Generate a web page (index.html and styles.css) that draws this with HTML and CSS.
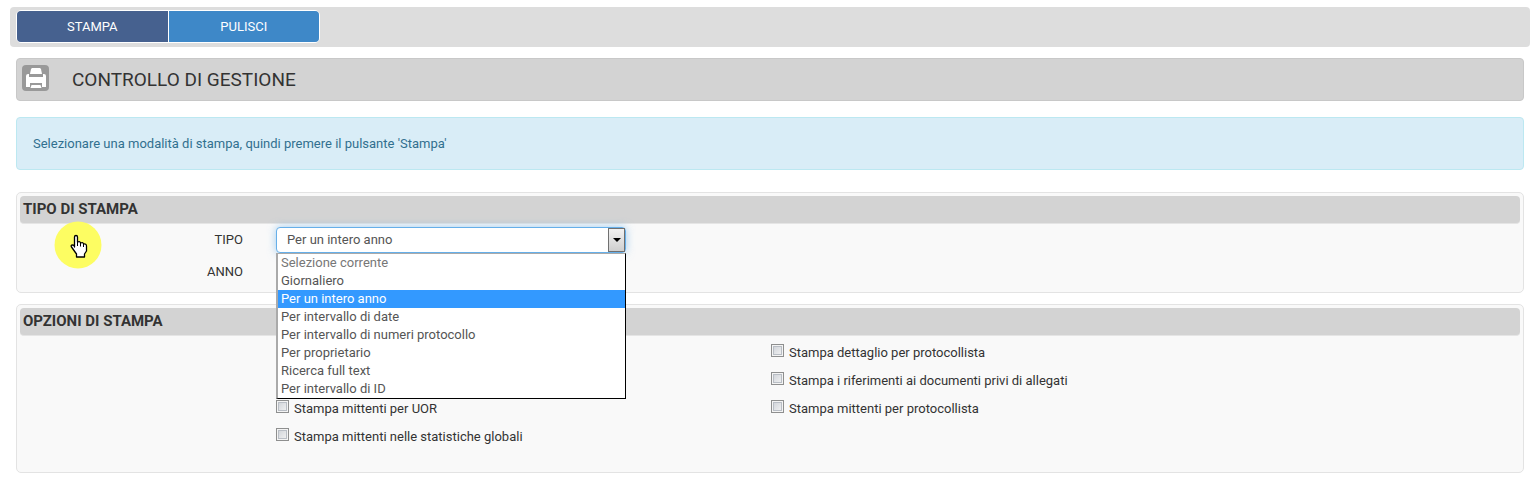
FILE: index.html
```
<!DOCTYPE html>
<html lang="it">
<head>
  <meta charset="utf-8">
  <title>Controllo di gestione</title>
  <link rel="stylesheet" href="styles.css">
</head>
<body>
  <nav class="toolbar">
    <div class="btn-group">
      <button type="submit" form="print-form" class="btn btn-active">STAMPA</button>
      <button type="reset" form="print-form" class="btn">PULISCI</button>
    </div>
  </nav>
  <main>
    <header class="page-title">
      <svg class="print-icon" width="27" height="26" viewBox="0 0 27 26" aria-hidden="true">
        <rect width="27" height="26" rx="4" fill="#999"/>
        <path d="M10 3h8l1 1 1 5H8l1-5z" fill="#fff"/>
        <path d="M4 11q0-2 2-2h1v3h14V9h1q2 0 2 2v11h-4v-4H8v4H4z" fill="#fff"/>
        <path d="M9.500 20h9l1 3H8.500z" fill="#fff"/>
      </svg>
      <h1>CONTROLLO DI GESTIONE</h1>
    </header>
    <p class="alert">Selezionare una modalità di stampa, quindi premere il pulsante 'Stampa'</p>
    <form id="print-form">
      <section class="panel">
        <h2>TIPO DI STAMPA</h2>
        <div class="fields">
          <label for="tipo">TIPO</label>
          <div class="select-box">
            <select id="tipo">
              <option>Per un intero anno</option>
            </select>
            <span class="arrow"></span>
            <ul class="menu" role="listbox" aria-label="Tipo">
              <li role="option" class="muted">Selezione corrente</li>
              <li role="option">Giornaliero</li>
              <li role="option" class="selected" aria-selected="true">Per un intero anno</li>
              <li role="option">Per intervallo di date</li>
              <li role="option">Per intervallo di numeri protocollo</li>
              <li role="option">Per proprietario</li>
              <li role="option">Ricerca full text</li>
              <li role="option">Per intervallo di ID</li>
            </ul>
          </div>
          <label for="anno">ANNO</label>
          <input type="text" id="anno" class="year">
        </div>
      </section>
      <section class="panel options-panel">
        <h2>OPZIONI DI STAMPA</h2>
        <div class="options">
          <div class="column column-end">
            <label class="check"><input type="checkbox">Stampa mittenti per UOR</label>
            <label class="check"><input type="checkbox">Stampa mittenti nelle statistiche globali</label>
          </div>
          <div class="column">
            <label class="check"><input type="checkbox">Stampa dettaglio per protocollista</label>
            <label class="check"><input type="checkbox">Stampa i riferimenti ai documenti privi di allegati</label>
            <label class="check"><input type="checkbox">Stampa mittenti per protocollista</label>
          </div>
        </div>
      </section>
    </form>
  </main>
  <svg class="pointer" width="48" height="48" viewBox="0 0 48 48" aria-hidden="true">
    <circle cx="24" cy="24" r="23.500" fill="#fdfd62"/>
    <path d="M20.500 26V16q0-1.500 1.500-1.500t1.500 1.500v5q3-1 3 1 3-1 3 1 3-.5 3 2v5l-2 3v3h-8v-3l-5-7q-1-2 1-2t2 2z" fill="#fff" stroke="#000" stroke-width="1.300" stroke-linejoin="round"/>
    <path d="M23.500 20v5M26.500 22v3.500M29.500 23v3" stroke="#000"/>
  </svg>
</body>
</html>
```
FILE: styles.css
```
* {
  box-sizing: border-box;
}

body {
  margin: 0;
  padding: 7px 9px 6px 10px;
  font: 13px/18px "Trebuchet MS", Roboto, sans-serif;
  color: #333;
  background: #fff;
}

.toolbar {
  padding: 3px 6px 4px;
  background: #ddd;
  border-radius: 4px;
}

.btn-group {
  display: flex;
  width: 304px;
  height: 33px;
  border: 1px solid #fff;
  border-radius: 5px;
  overflow: hidden;
}

.btn {
  flex: 1;
  border: 0;
  border-left: 1px solid #fff;
  background: #3e88c8;
  color: #fff;
  font: inherit;
  cursor: pointer;
}

.btn-active {
  border-left: 0;
  background: #46618f;
}

main {
  padding: 0 6px;
}

.page-title {
  display: flex;
  align-items: center;
  gap: 23px;
  height: 43px;
  margin-top: 11px;
  padding: 0 5px;
  background: #d3d3d3;
  border: 1px solid #c8c8c8;
  border-radius: 4px;
}

.print-icon {
  margin-bottom: 3px;
}

h1, h2 {
  margin: 0;
}

h1 {
  font-size: 19px;
  font-weight: normal;
}

.alert {
  margin: 16px 0 22px;
  padding: 17px 16px 16px;
  background: #d9edf7;
  border: 1px solid #bce8f1;
  border-radius: 4px;
  color: #31708f;
}

.panel {
  padding: 3px;
  min-height: 101px;
  margin-bottom: 11px;
  background: #f9f9f9;
  border: 1px solid #e3e3e3;
  border-radius: 5px;
}

.options-panel {
  min-height: 169px;
  margin-bottom: 0;
}

h2 {
  padding: 0 3px;
  font-size: 15px;
  line-height: 27px;
  background: #d3d3d3;
  border-bottom: 1px solid #e5e5e5;
  border-radius: 4px;
}

.fields {
  display: grid;
  grid-template-columns: 223px 350px;
  gap: 6px 33px;
  align-items: center;
  padding-top: 3px;
}

.fields > label {
  text-align: right;
}

.select-box {
  position: relative;
}

select, .year {
  display: block;
  width: 100%;
  height: 26px;
  padding: 0 10px;
  border: 1px solid #ccc;
  border-radius: 4px;
  background: #fff;
  color: #555;
  font: inherit;
}

select {
  appearance: none;
  border-color: #66afe9;
  box-shadow: 0 0 8px rgba(102, 175, 233, 0.6);
}

.arrow {
  position: absolute;
  top: 1px;
  right: 1px;
  display: flex;
  align-items: center;
  justify-content: center;
  width: 17px;
  height: 24px;
  border: 1px solid #707070;
  background: linear-gradient(#f2f2f2, #cfcfcf);
  pointer-events: none;
}

.arrow::after {
  content: "";
  border: 4px solid transparent;
  border-top-color: #000;
  border-bottom: 0;
}

.menu {
  position: absolute;
  z-index: 1;
  top: 26px;
  left: 0;
  width: 100%;
  margin: 0;
  padding: 0;
  list-style: none;
  background: #fff;
  border: 1px solid #000;
  border-top-color: #aaa;
  border-left: 2px solid #aaa;
  color: #555;
}

.menu li {
  padding: 0 3px;
}

.menu .muted {
  color: #777;
}

.menu .selected {
  background: #3399ff;
  color: #fff;
}

.options {
  display: grid;
  grid-template-columns: 256px 33% 1fr;
  padding-top: 8px;
}

.column {
  display: flex;
  flex-direction: column;
  gap: 10px;
}

.column-end {
  grid-column: 2;
  padding-top: 56px;
}

.check {
  display: flex;
  gap: 5px;
}

.check input {
  appearance: none;
  width: 13px;
  height: 13px;
  margin: 0;
  border: 1px solid #8e8f8f;
  background: linear-gradient(135deg, #cbcfd5, #f6f6f6);
  box-shadow: inset 0 0 0 1px #f4f4f4, inset 0 0 0 2px #b9bec5;
}

/* highlighted mouse pointer */
.pointer {
  position: absolute;
  top: 221px;
  left: 54px;
}
```
